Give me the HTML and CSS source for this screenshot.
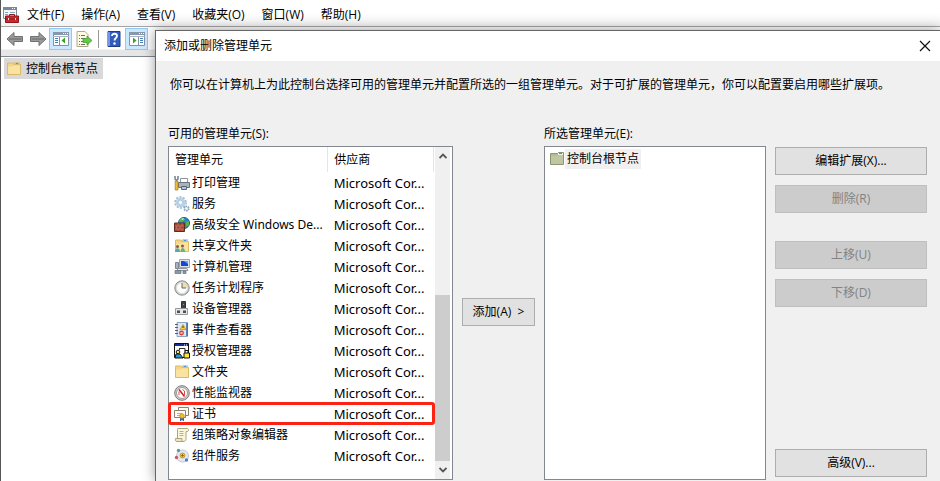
FILE: index.html
```html
<!DOCTYPE html>
<html lang="zh-CN">
<head>
  <meta charset="UTF-8">
  <title>添加或删除管理单元</title>
  <link rel="stylesheet" href="styles.css">
</head>
<body>

  <!-- 共用图标 -->
  <svg class="defs" width="0" height="0" aria-hidden="true">
    <symbol id="i-folder" viewBox="0 0 16 16">
      <path d="M1.500 3.500V2h5.500l1 1.500h6.500v10h-13z" fill="#f3d583" stroke="#dcb964" stroke-width="1"/>
      <path d="M8.500 1.500h5v2h-5z" fill="#fff" stroke="#c9a75a" stroke-width=".6"/>
      <path d="M9.500 2.500h3" stroke="#4a94d8"/>
      <path d="M2 5.500h5l1-1h6v8.500H2z" fill="#fae3a0"/>
    </symbol>
    <symbol id="i-window" viewBox="0 0 18 16">
      <path d="M1.500 1.500h15v13h-15z" fill="#fff" stroke="#8492a6"/>
      <path d="M1 1h16v3H1z" fill="#8797ad"/>
      <path d="M11 2.500h1M13 2.500h1M15 2.500h1" stroke="#fff"/>
      <path d="M1 5.500h16" stroke="#a9b4c2"/>
    </symbol>
  </svg>

  <nav class="menubar">
    <svg class="app-icon" width="16" height="16" viewBox="0 0 16 16">
      <path d="M.5 .5h13v11H.5z" fill="#f4f6f8" stroke="#7d8b9b"/>
      <path d="M0 0h14v3H0z" fill="#78889b"/>
      <path d="M9 1.500h1M11 1.500h1" stroke="#fff"/>
      <path d="M2 5.500h3M2 7.500h3M7 5.500h5" stroke="#8ba3bd"/>
      <path d="M6.500 9V7.500h5V9" fill="none" stroke="#802020"/>
      <path d="M2.500 9h13v6.500h-13z" fill="#cf2930" stroke="#8d171d"/>
      <path d="M3 12h12" stroke="#86161b"/>
      <path d="M5.500 11v2M12.500 11v2" stroke="#ddd"/>
    </svg>
    <a href="#">文件(F)</a>
    <a href="#">操作(A)</a>
    <a href="#">查看(V)</a>
    <a href="#">收藏夹(O)</a>
    <a href="#">窗口(W)</a>
    <a href="#">帮助(H)</a>
  </nav>

  <div class="toolbar">
    <button class="tool" aria-label="后退">
      <svg width="18" height="16" viewBox="0 0 18 16"><path d="M1 8l7-6.500v4h8.500v5H8v4z" fill="#9b9b9b" stroke="#707070"/><path d="M3 8h12.500" stroke="#808080" stroke-width="2"/></svg>
    </button>
    <button class="tool" aria-label="前进">
      <svg width="18" height="16" viewBox="0 0 18 16"><path d="M17 8l-7-6.500v4H1.500v5H10v4z" fill="#9b9b9b" stroke="#707070"/><path d="M2.500 8H15" stroke="#808080" stroke-width="2"/></svg>
    </button>
    <button class="tool active" aria-label="控制台树">
      <svg width="18" height="16" viewBox="0 0 18 16"><use href="#i-window"/><path d="M7.500 6v8" stroke="#8492a6"/><path d="M3 7.500h3M3 9.500h3M3 11.500h3" stroke="#4d80b8"/><path d="M13 6.500v6L9.500 9.500z" fill="#36a51f"/></svg>
    </button>
    <button class="tool" aria-label="导出列表">
      <svg width="18" height="16" viewBox="0 0 18 16"><path d="M2 .5h8l3 3v12H2z" fill="#fffbe2" stroke="#b0a886"/><path d="M4 4.500h1M6 4.500h4M4 7.500h1M6 7.500h4M4 10.500h1M6 10.500h2M4 13.500h1M6 13.500h4" stroke="#6c6b7b"/><path d="M8 7.500h4V5l5 4.500-5 4.500v-2.500H8z" fill="#65c948" stroke="#359b25" stroke-width=".7"/></svg>
    </button>
    <span class="divider"></span>
    <button class="tool" aria-label="帮助">
      <svg width="18" height="16" viewBox="0 0 18 16"><path d="M3 .5h12v15H3z" fill="#315cc0" stroke="#203a88"/><path d="M3 1h2v14H3z" fill="#7796df"/><path d="M7 5c0-3 5-3 5 0 0 2-2.500 2-2.500 4.500" fill="none" stroke="#fff" stroke-width="1.800"/><circle cx="9.500" cy="12.500" r="1.200" fill="#fff"/></svg>
    </button>
    <button class="tool active" aria-label="操作窗格">
      <svg width="18" height="16" viewBox="0 0 18 16"><use href="#i-window"/><path d="M10.500 6v8" stroke="#8492a6"/><path d="M12 7.500h3M12 9.500h3M12 11.500h3" stroke="#4d80b8"/><path d="M5 6.500v6l3.500-3z" fill="#36a51f"/></svg>
    </button>
  </div>

  <main class="workspace">
    <div class="tree-node">
      <svg width="16" height="16"><use href="#i-folder"/></svg>
      <span>控制台根节点</span>
    </div>
  </main>

  <!-- 添加/删除对话框 -->
  <section class="dialog" role="dialog" aria-labelledby="dialog-title">
    <header class="titlebar">
      <h1 id="dialog-title">添加或删除管理单元</h1>
      <button class="close" aria-label="关闭">
        <svg width="12" height="12" viewBox="0 0 12 12"><path d="M1 1l10 10M11 1L1 11" stroke="#111" stroke-width="1.200"/></svg>
      </button>
    </header>

    <div class="dialog-body">
      <p class="intro">你可以在计算机上为此控制台选择可用的管理单元并配置所选的一组管理单元。对于可扩展的管理单元，你可以配置要启用哪些扩展项。</p>

      <div class="columns">
        <div class="panel">
          <h2>可用的管理单元(S):</h2>
          <div class="listbox available">
            <table>
              <thead>
                <tr><th class="name">管理单元</th><th>供应商</th></tr>
              </thead>
              <tbody>
                <tr>
                  <td><svg width="16" height="16" viewBox="0 0 16 16"><path d="M6.500 3.500h7v4h-7z" fill="#fff" stroke="#8a949e"/><path d="M4.500 7.500h11v5h-11z" fill="#aab2bd" stroke="#69727e"/><path d="M7.500 11.500h5v3h-5z" fill="#fff" stroke="#596470"/><path d="M8 13h4" stroke="#5b8fc7"/><path d="M1 1v3l1.500 1.500L4 4V1" fill="none" stroke="#718093" stroke-width="1.500"/><path d="M1.200 6h2.800v9H1.200z" fill="#f1bd31" stroke="#a87816" stroke-width=".7"/></svg>打印管理</td>
                  <td class="vendor">Microsoft Cor...</td>
                </tr>
                <tr>
                  <td><svg width="16" height="16" viewBox="0 0 16 16"><circle cx="6.500" cy="6.500" r="5.300" fill="none" stroke="#9dbbd3" stroke-width="2" stroke-dasharray="2 1.330"/><circle cx="6.500" cy="6.500" r="3.700" fill="#fff" stroke="#b8d3e8" stroke-width="2.400"/><circle cx="6.500" cy="6.500" r="2.200" fill="#fff" stroke="#8eadc7" stroke-width=".7"/><circle cx="12.500" cy="12.500" r="2.300" fill="#d4e5f2" stroke="#86a1b9" stroke-width="1.600" stroke-dasharray="1.400 .8"/><circle cx="12.500" cy="12.500" r="1" fill="#fff"/></svg>服务</td>
                  <td class="vendor">Microsoft Cor...</td>
                </tr>
                <tr>
                  <td><svg width="16" height="16" viewBox="0 0 16 16"><circle cx="10" cy="6" r="5.500" fill="#2883d1" stroke="#16599a"/><path d="M6 2c2-2 5-1 5 1L8 5H5zM12 5l3-1v4l-3 2z" fill="#58b54a"/><path d="M7 2l3-1-1 2z" fill="#d5f0ff"/><path d="M.5 6h10v8.500H.5z" fill="#a44832" stroke="#67281b"/><path d="M1 9h9M1 12h9M4 6v3M8 6v3M2.500 9v3M6 9v3M4 12v2M8 12v2" stroke="#c98370" stroke-width=".6"/></svg>高级安全 Windows De...</td>
                  <td class="vendor">Microsoft Cor...</td>
                </tr>
                <tr>
                  <td><svg width="16" height="16" viewBox="0 0 16 16"><use href="#i-folder"/><circle cx="3.500" cy="8.500" r="1.500" fill="#8a5b3d"/><path d="M1 14c0-5 5-5 5 0z" fill="#5aa6b8"/><circle cx="8.500" cy="8" r="1.500" fill="#8a5b3d"/><path d="M6.500 14c0-5.500 4.500-5.500 4.500 0z" fill="#6eaf79"/></svg>共享文件夹</td>
                  <td class="vendor">Microsoft Cor...</td>
                </tr>
                <tr>
                  <td><svg width="16" height="16" viewBox="0 0 16 16"><path d="M5.500 .5h10v8h-10z" fill="#dce2e9" stroke="#9aa4af"/><path d="M7 2h7v5H7z" fill="#1747ce"/><path d="M10 2h4v3z" fill="#70a5ff"/><path d="M1.500 3.500h3v6h-3z" fill="#aab3bd" stroke="#7b8692"/><path d="M4 9.500h9l1 2H3z" fill="#e9edf1" stroke="#8d96a0"/><path d="M1 11.500h6v3H1zM9 12h3v2.500H9z" fill="#8d98a4" stroke="#69737e" stroke-width=".7"/></svg>计算机管理</td>
                  <td class="vendor">Microsoft Cor...</td>
                </tr>
                <tr>
                  <td><svg width="16" height="16" viewBox="0 0 16 16"><circle cx="8" cy="8" r="7.200" fill="#c3c8cc" stroke="#8b9197"/><circle cx="8" cy="8" r="5.500" fill="#fffdf5" stroke="#e0dfda"/><path d="M8 8V2.500A5.500 5.500 0 0 1 13.500 8z" fill="#f3dda3"/><path d="M8 3v5h4" fill="none" stroke="#526d91"/></svg>任务计划程序</td>
                  <td class="vendor">Microsoft Cor...</td>
                </tr>
                <tr>
                  <td><svg width="16" height="16" viewBox="0 0 16 16"><path d="M7.500 .5h4v7h-4z" fill="#3d4247" stroke="#333"/><path d="M9 3.500h1" stroke="#3bda4b"/><path d="M1.500 7.500h12v6h-12z" fill="#e6e7e7" stroke="#999"/><path d="M3 9.500h3v2.500H3zM9 9.500h3v2.500H9z" fill="#4c5054"/></svg>设备管理器</td>
                  <td class="vendor">Microsoft Cor...</td>
                </tr>
                <tr>
                  <td><svg width="16" height="16" viewBox="0 0 16 16"><path d="M3 .5h10.500v14H3z" fill="#dce7f3" stroke="#8aa4c2"/><path d="M13 1v13" stroke="#3b659f" stroke-width="1.500"/><path d="M1 2.500h3M1 5.500h3M1 8.500h3M1 11.500h3" stroke="#58616d"/><path d="M9 2.500l3 5H6z" fill="#ffd238" stroke="#bd8715" stroke-width=".7"/><path d="M9 4v2" stroke="#443300"/><circle cx="7.500" cy="11" r="2.400" fill="#d73932"/><path d="M6.500 10l2 2M8.500 10l-2 2" stroke="#fff" stroke-width=".8"/></svg>事件查看器</td>
                  <td class="vendor">Microsoft Cor...</td>
                </tr>
                <tr>
                  <td><svg width="16" height="16" viewBox="0 0 16 16"><path d="M.5 .5h14v14H.5z" fill="#fff" stroke="#111"/><path d="M1 1h13v2H1z" fill="#172c9c"/><path d="M10 2h1M12 2h1" stroke="#fff"/><path d="M5 5.500h6v3M4 8l2-2" fill="none" stroke="#333"/><circle cx="4" cy="9" r="1.800" fill="#ffe94c" stroke="#111"/><path d="M11 10V7.500h3V10" fill="none" stroke="#111"/><path d="M10 10h5.500v5H10z" fill="#ffe633" stroke="#111"/><path d="M1 15l1-4h4l3 4z" fill="#2d9ad1" stroke="#111"/></svg>授权管理器</td>
                  <td class="vendor">Microsoft Cor...</td>
                </tr>
                <tr>
                  <td><svg width="16" height="16"><use href="#i-folder"/></svg>文件夹</td>
                  <td class="vendor">Microsoft Cor...</td>
                </tr>
                <tr>
                  <td><svg width="16" height="16" viewBox="0 0 16 16"><circle cx="8" cy="8" r="7.300" fill="#d1d3d5" stroke="#777"/><circle cx="8" cy="8" r="5.500" fill="#fff" stroke="#999"/><path d="M5 4.500l5.500 7" stroke="#cb2024" stroke-width="1.500"/><path d="M5 10V6.500M8.500 4.500l2 1.500v4" fill="none" stroke="#d84a48"/></svg>性能监视器</td>
                  <td class="vendor">Microsoft Cor...</td>
                </tr>
                <tr class="marked">
                  <td><svg width="16" height="16" viewBox="0 0 16 16"><path d="M4.500 1.500h10v8h-10z" fill="#fffdf1" stroke="#8d816c"/><path d="M.5 4.500h11v7H.5z" fill="#fffef8" stroke="#8d816c"/><path d="M3 7.500h5M3 9.500h3" stroke="#b5ad9c"/><path d="M6 10.500v5l2-1.500 2 1.500v-5z" fill="#2c68b5"/><circle cx="8" cy="10" r="2.300" fill="#f5bd2c" stroke="#c68a16" stroke-width=".7"/></svg>证书</td>
                  <td class="vendor">Microsoft Cor...</td>
                </tr>
                <tr>
                  <td><svg width="16" height="16" viewBox="0 0 16 16"><path d="M4 1.500h9c2 0 2 3 0 3h-1v7c0 2-1 3-3 3H3.500V3c0-1 0-1.500.5-1.500z" fill="#fcf6db" stroke="#aba386"/><path d="M1.500 11.500H8c0 2 0 3 1.500 3H3c-1.500 0-2-1-1.500-3z" fill="#eee4bc" stroke="#aba386"/><path d="M5.500 4.500h4M5.500 6.500h4M5.500 8.500h4" stroke="#a19e94" stroke-width=".8"/></svg>组策略对象编辑器</td>
                  <td class="vendor">Microsoft Cor...</td>
                </tr>
                <tr>
                  <td><svg width="16" height="16" viewBox="0 0 16 16"><circle cx="8.500" cy="8" r="6" fill="#e6eaf0" stroke="#c0c7d0"/><circle cx="8.500" cy="7.500" r="2.500" fill="#e7c750" stroke="#a98519" stroke-width=".7"/><path d="M8.500 6v3M7 7.500h3" stroke="#7d6000" stroke-width=".7"/><circle cx="4.500" cy="2.500" r="1.700" fill="#55a08c"/><circle cx="2.500" cy="9.500" r="1.700" fill="#cf5663"/><circle cx="12.500" cy="12" r="1.700" fill="#5978c8"/></svg>组件服务</td>
                  <td class="vendor">Microsoft Cor...</td>
                </tr>
              </tbody>
            </table>
            <div class="scrollbar">
              <button aria-label="向上滚动"><svg width="8" height="6" viewBox="0 0 8 6"><path d="M.5 5L4 1.500 7.500 5" fill="none" stroke="#555" stroke-width="1.800"/></svg></button>
              <div class="track"><div class="thumb"></div></div>
              <button aria-label="向下滚动"><svg width="8" height="6" viewBox="0 0 8 6"><path d="M.5 1L4 4.500 7.500 1" fill="none" stroke="#555" stroke-width="1.800"/></svg></button>
            </div>
          </div>
        </div>

        <button class="btn add">添加(A) &nbsp;&gt;</button>

        <div class="panel">
          <h2>所选管理单元(E):</h2>
          <div class="listbox">
            <div class="selected-node">
              <svg width="16" height="16" viewBox="0 0 16 16"><path d="M1.500 2.500h7l1-1h5v12h-13z" fill="#b4bd96" stroke="#8d9672"/><path d="M9 2h5v2H9z" fill="#e9f0f2"/><path d="M10 2.500h3" stroke="#4a94d8"/><path d="M2 5h7l1-1h4v9H2z" fill="#bec7a1"/></svg>
              <span>控制台根节点</span>
            </div>
          </div>
        </div>

        <div class="actions">
          <button class="btn">编辑扩展(X)...</button>
          <button class="btn" disabled>删除(R)</button>
          <button class="btn move" disabled>上移(U)</button>
          <button class="btn" disabled>下移(D)</button>
          <button class="btn advanced">高级(V)...</button>
        </div>
      </div>
    </div>
  </section>

</body>
</html>
```
FILE: styles.css
```css
* {
  box-sizing: border-box;
}

body {
  display: flex;
  flex-direction: column;
  min-height: 100vh;
  margin: 0;
  border-left: 1px solid #555;
  background-color: #f0f0f0;
  color: #000;
  font-family: "Open Sans", "Noto Sans CJK SC", sans-serif;
  font-size: 12px;
  line-height: 20px;
  overflow: hidden;
}

button {
  padding: 0;
  color: inherit;
  font: inherit;
}

svg {
  flex: none;
}

.defs {
  position: absolute;
}

/* menu + toolbar */
.menubar {
  display: flex;
  align-items: center;
  gap: 17px;
  height: 27px;
  padding: 4px 2px 0;
  background: linear-gradient(#fff 50%, #f3f3f3);
  border-bottom: 1px solid #a5a5a5;
}

.menubar a {
  color: #000;
  text-decoration: none;
}

.app-icon {
  margin-right: -9px;
}

.toolbar {
  display: flex;
  align-items: center;
  height: 30px;
  padding: 0 2px 5px;
  background: linear-gradient(#fff 22px, #e6e6e6 23px);
  border-bottom: 1px solid #828790;
}

.tool {
  display: flex;
  align-items: center;
  justify-content: center;
  width: 23px;
  height: 22px;
  border: 1px solid transparent;
  background: none;
}

.tool.active {
  border-color: #90c8f6;
  background-color: #cce8ff;
}

.divider {
  width: 1px;
  height: 18px;
  margin: 0 3px;
  background-color: #999;
}

.workspace {
  flex: 1;
  padding: 1px 3px;
  background-color: #fff;
}

.tree-node {
  display: flex;
  align-items: center;
  gap: 4px;
  width: 99px;
  padding: 1px 0 0 2px;
  background-color: #d9d9d9;
}

/* dialog */
.dialog {
  position: absolute;
  top: 30px;
  right: 0;
  bottom: 0;
  left: 155px;
  display: flex;
  flex-direction: column;
  border: solid #666;
  border-width: 1px 0 0 1px;
  background-color: #f0f0f0;
  box-shadow: 0 0 12px rgba(0, 0, 0, 0.4);
}

.titlebar {
  display: flex;
  align-items: center;
  justify-content: space-between;
  height: 30px;
  padding: 0 9px 0 8px;
  background-color: #fff;
}

h1,
h2 {
  margin: 0;
  font-size: 12px;
  font-weight: normal;
}

.close {
  display: flex;
  border: 0;
  background: none;
}

.dialog-body {
  flex: 1;
  display: flex;
  flex-direction: column;
  min-height: 0;
  padding: 14px 13px 1px 12px;
}

.intro {
  margin: 0 0 29px 2px;
}

.columns {
  flex: 1;
  display: grid;
  grid-template-columns: minmax(0, 285fr) 73px minmax(0, 222fr) 152px;
  gap: 9px;
  min-height: 0;
}

.panel {
  display: flex;
  flex-direction: column;
  gap: 2px;
  min-height: 0;
}

.listbox {
  flex: 1;
  min-height: 0;
  border: 1px solid #828790;
  background-color: #fff;
}

.available {
  display: flex;
  padding-right: 2px;
}

table {
  flex: 1;
  align-self: flex-start;
  min-width: 0;
  border-collapse: collapse;
  table-layout: fixed;
  font-family: "Noto Sans", "Noto Sans CJK SC", sans-serif;
}

th {
  height: 25px;
  padding: 0 6px;
  border-right: 1px solid #e5e5e5;
  font-weight: normal;
  text-align: left;
}

th.name {
  width: 60%;
}

td {
  height: 21px;
  padding: 0 0 0 6px;
  line-height: 18px;
  white-space: nowrap;
}

td.vendor {
  font-size: 13px;
}

td svg {
  margin: 0 2px 0 -1px;
  vertical-align: -4px;
}

.marked {
  outline: 3px solid #fa2314;
  outline-offset: -2px;
  border-radius: 2px;
}

.scrollbar {
  display: flex;
  flex-direction: column;
  width: 15px;
  margin-left: 1px;
  background-color: #f0f0f0;
}

.scrollbar button {
  display: flex;
  align-items: center;
  justify-content: center;
  height: 18px;
  border: 0;
  background: none;
}

.track {
  flex: 1;
  display: flex;
  flex-direction: column;
  justify-content: flex-end;
}

.thumb {
  height: 56%;
  background-color: #cdcdcd;
}

.btn {
  height: 28px;
  border: 1px solid #adadad;
  background-color: #e1e1e1;
}

.btn:disabled {
  border-color: #bfbfbf;
  background-color: #ccc;
  color: #838383;
}

.add {
  align-self: center;
  margin-top: 20px;
}

.selected-node {
  display: flex;
  align-items: center;
  padding: 2px 4px;
}

.selected-node span {
  padding: 0 2px;
  background-color: #f0f0f0;
}

.actions {
  display: flex;
  flex-direction: column;
  gap: 10px;
  padding: 23px 0 3px;
}

.move {
  margin-top: 18px;
}

.advanced {
  margin-top: auto;
}
```
